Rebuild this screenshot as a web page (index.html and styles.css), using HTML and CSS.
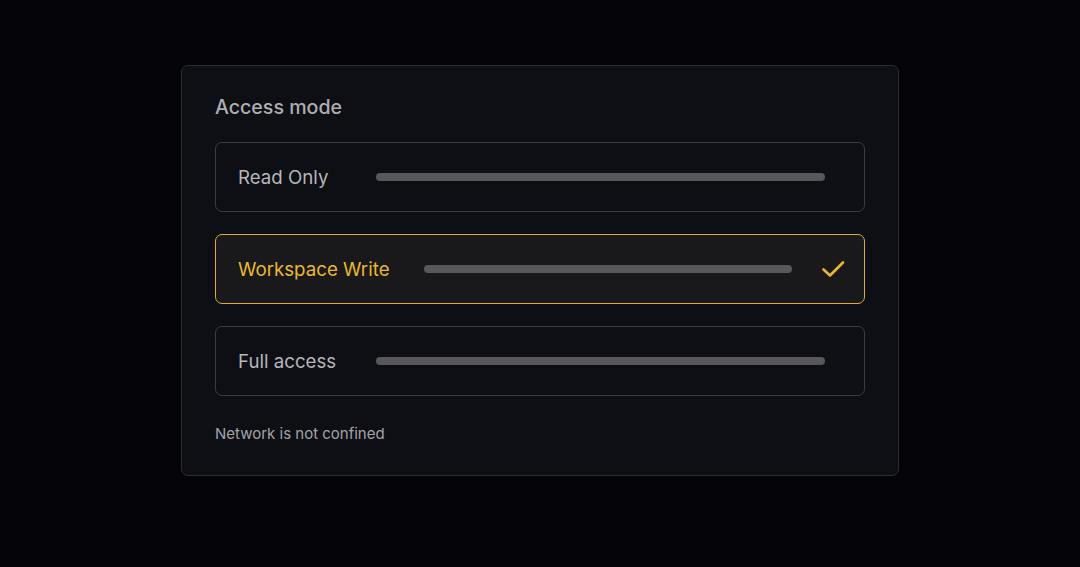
FILE: index.html
```html
<!DOCTYPE html>
<html lang="en">
<head>
  <meta charset="UTF-8" />
  <meta name="viewport" content="width=device-width, initial-scale=1.0" />
  <title>Access mode</title>
  <link rel="stylesheet" href="styles.css">
</head>
<body>
  <div class="panel">
    <h2 class="panel-title">Access mode</h2>

    <div class="option">
      <span class="option-label">Read Only</span>
      <span class="option-bar"></span>
    </div>

    <div class="option option-selected">
      <span class="option-label">Workspace Write</span>
      <span class="option-bar"></span>
      <svg class="option-check" viewBox="0 0 24 24" width="24" height="24" fill="none" stroke="currentColor" stroke-width="2.6" stroke-linecap="round" stroke-linejoin="round">
        <path d="M2.5 12.5l6.5 6L22 5.5" />
      </svg>
    </div>

    <div class="option">
      <span class="option-label">Full access</span>
      <span class="option-bar"></span>
    </div>

    <p class="panel-note">Network is not confined</p>
  </div>
</body>
</html>
```

FILE: styles.css
```css
body {
  margin: 0;
  background: #050509;
  font-family: 'Inter', 'Noto Sans', sans-serif;
  min-height: 100vh;
  padding-top: 65px;
  box-sizing: border-box;
}

.panel {
  width: 718px;
  margin: 0 0 0 181px;
  box-sizing: border-box;
  background: #0e0f14;
  border: 1px solid #2c2d33;
  border-radius: 7px;
  padding: 28px 33px 32px;
}

.panel-title {
  margin: 0 0 22px;
  font-size: 19.6px;
  font-weight: 500;
  color: #aeaeb2;
  line-height: 26px;
}

.option {
  display: flex;
  align-items: center;
  height: 70px;
  box-sizing: border-box;
  padding: 0 39px 0 22px;
  border: 1px solid #3b3c43;
  border-radius: 7px;
  margin-bottom: 22px;
}

.option-label {
  min-width: 104px;
  margin-right: 34px;
  font-size: 18.7px;
  color: #b6b6b9;
  white-space: nowrap;
}

.option-bar {
  flex: 1;
  height: 8px;
  border-radius: 4px;
  background: #57575c;
}

.option-selected {
  background: #19191b;
  border: 1.5px solid #dcae2c;
  padding-right: 19px;
}

.option-selected .option-label {
  color: #e8b92f;
}

.option-check {
  margin-left: 29px;
  color: #e8b92f;
}

.panel-note {
  margin: 28px 0 0;
  font-size: 15px;
  color: #a3a3a7;
}
```
